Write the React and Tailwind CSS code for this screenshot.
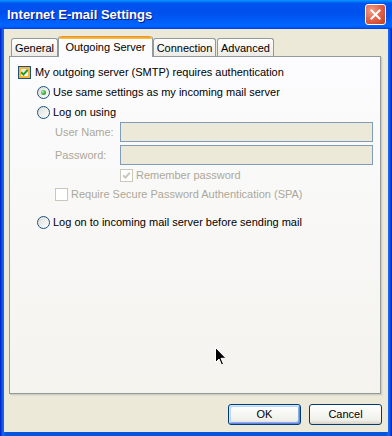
import React from "react";

function CheckMark({ color }) {
  return (
    <svg width="9" height="9" viewBox="0 0 9 9">
      <polyline points="1.2,4.2 3.4,6.6 7.8,1.8" fill="none" stroke={color} strokeWidth="2" />
    </svg>
  );
}

function Checkbox({ checked, disabled, hot }) {
  return (
    <span
      className={`relative flex h-[13px] w-[13px] shrink-0 items-center justify-center border ${
        disabled
          ? "border-[#cac8bb] bg-white"
          : "border-[#1c5180] bg-[linear-gradient(135deg,#dcdcd7,#ffffff)]"
      }`}
    >
      {hot && <span className="absolute inset-0 border-2 border-[#f8b636]" />}
      {checked && <CheckMark color={disabled ? "#cac8bb" : "#21a121"} />}
    </span>
  );
}

function Radio({ checked }) {
  return (
    <span className="flex h-[13px] w-[13px] shrink-0 items-center justify-center rounded-full border border-[#1c5180] bg-[linear-gradient(135deg,#dcdcd7,#ffffff)]">
      {checked && (
        <span className="h-[5px] w-[5px] rounded-full bg-[radial-gradient(circle_at_35%_35%,#a8f0a0,#21a121_70%)]" />
      )}
    </span>
  );
}

function Tab({ label, active, w }) {
  if (active) {
    return (
      <div
        className={`${w} flex h-[21px] flex-col rounded-t-[3px] border-x border-[#919b9c] bg-[#fcfcfe]`}
      >
        <div className="h-[3px] rounded-t-[3px] bg-[linear-gradient(to_bottom,#e68b2c,#ffc73c)]" />
        <div className="flex flex-1 items-center justify-center pb-[2px]">{label}</div>
      </div>
    );
  }
  return (
    <div
      className={`${w} mb-[1px] flex h-[18px] items-center justify-center rounded-t-[3px] border border-b-0 border-[#919b9c] bg-[linear-gradient(to_bottom,#ffffff,#ecebe6)] pt-[1px]`}
    >
      {label}
    </div>
  );
}

function XpButton({ children, isDefault }) {
  return (
    <button
      className={`flex h-[21px] w-[73px] items-center justify-center rounded-[3px] border border-[#003c74] bg-[linear-gradient(to_bottom,#ffffff,#f0f0ea_80%,#d6d0c5)] ${
        isDefault ? "shadow-[inset_1px_1px_0_#cee7ff,inset_-1px_-1px_0_#6982ee,inset_2px_2px_0_#bcd4f6,inset_-2px_-2px_0_#89ade4]" : ""
      }`}
    >
      {children}
    </button>
  );
}

export default function App() {
  return (
    <div className="relative flex h-[436px] w-[392px] flex-col bg-[linear-gradient(to_right,#0019cf,#0855dd_2px,#166aee_3px,#0855dd_6px,#0855dd_calc(100%-6px),#166aee_calc(100%-3px),#0019cf)] font-['Liberation_Sans',Arial,sans-serif] text-[11px] text-black">
      {/* title bar */}
      <div className="flex h-[29px] shrink-0 items-center justify-between bg-[linear-gradient(to_bottom,#0997ff_0%,#0053ee_12%,#0050ee_45%,#0066ff_88%,#005bff_94%,#003dd7_100%)] pl-[7px] pr-[6px]">
        <span className="text-[13px] font-bold text-white [text-shadow:1px_1px_#0a1883]">
          Internet E-mail Settings
        </span>
        <span className="flex h-[21px] w-[21px] items-center justify-center rounded-[3px] border border-white bg-[radial-gradient(circle_at_30%_30%,#f0a088,#e2614a_50%,#c13d18)]">
          <svg width="11" height="11" viewBox="0 0 11 11">
            <path d="M1.5 1.5 L9.5 9.5 M9.5 1.5 L1.5 9.5" stroke="white" strokeWidth="2" strokeLinecap="square" />
          </svg>
        </span>
      </div>

      {/* body */}
      <div className="mx-[4px] mb-[4px] flex flex-1 flex-col bg-[#ece9d8] pl-[5px] pt-[7px]">
        <div className="relative z-10 flex h-[21px] items-end pl-[2px]">
          <Tab label="General" w="w-[47px]" />
          <Tab label="Outgoing Server" w="w-[95px]" active />
          <Tab label="Connection" w="w-[63px]" />
          <div className="w-[1px]" />
          <Tab label="Advanced" w="w-[57px]" />
        </div>

        <div className="-mt-px h-[338px] w-[372px] border border-[#919b9c] bg-[linear-gradient(to_bottom,#fcfcfe,#f4f3ee)] pl-[8px] pt-[9px] shadow-[1px_1px_0_#d0cec2,2px_2px_0_#e2dfd2]">
          <div className="flex h-[13px] items-center gap-[4px]">
            <Checkbox checked hot />
            <span>My outgoing server (SMTP) requires authentication</span>
          </div>
          <div className="ml-[19px] mt-[7px] flex h-[13px] items-center gap-[3px]">
            <Radio checked />
            <span>Use same settings as my incoming mail server</span>
          </div>
          <div className="ml-[19px] mt-[7px] flex h-[13px] items-center gap-[3px]">
            <Radio />
            <span>Log on using</span>
          </div>
          <div className="ml-[37px] mt-[3px] flex h-[20px] items-center">
            <span className="w-[65px] text-[#aca899]">User Name:</span>
            <div className="h-[20px] w-[253px] border border-[#7f9db9] bg-[#ece9d8]" />
          </div>
          <div className="ml-[37px] mt-[3px] flex h-[20px] items-center">
            <span className="w-[65px] text-[#aca899]">Password:</span>
            <div className="h-[20px] w-[253px] border border-[#7f9db9] bg-[#ece9d8]" />
          </div>
          <div className="ml-[102px] mt-[4px] flex h-[13px] items-center gap-[3px]">
            <Checkbox checked disabled />
            <span className="text-[#aca899]">Remember password</span>
          </div>
          <div className="ml-[37px] mt-[6px] flex h-[13px] items-center gap-[3px]">
            <Checkbox disabled />
            <span className="text-[#aca899]">Require Secure Password Authentication (SPA)</span>
          </div>
          <div className="ml-[19px] mt-[15px] flex h-[13px] items-center gap-[3px]">
            <Radio />
            <span>Log on to incoming mail server before sending mail</span>
          </div>
        </div>

        <div className="ml-[219px] mt-[10px] flex gap-[8px]">
          <XpButton isDefault>OK</XpButton>
          <XpButton>Cancel</XpButton>
        </div>
      </div>

      {/* mouse pointer */}
      <svg className="absolute left-[215px] top-[347px]" width="12" height="19" viewBox="0 0 12 19">
        <path d="M0.5 0.5 L0.5 15.5 L4 12 L6.5 18 L8.5 17 L6 11.3 L11 11.3 Z" fill="black" stroke="white" strokeWidth="1" />
      </svg>
    </div>
  );
}
